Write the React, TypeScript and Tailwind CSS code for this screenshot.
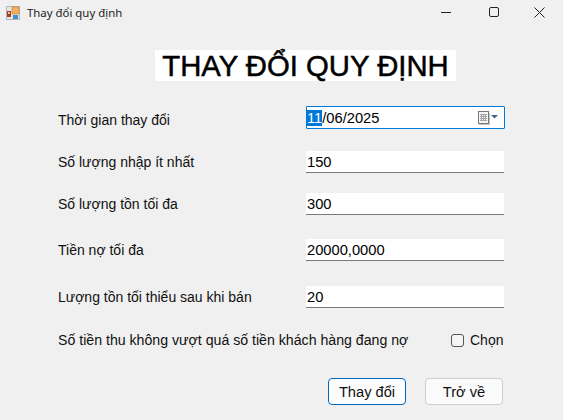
import { FC } from "react";

const sans = "font-['Noto_Sans','Liberation_Sans',sans-serif]";
const arial = "font-['Liberation_Sans',Arial,sans-serif]";

const AppIcon: FC = () => (
  <svg width="14" height="14" viewBox="0 0 14 14">
    <rect x="0.5" y="0.5" width="13" height="13" fill="#e6e6e6" stroke="#b5b5b5" />
    <rect x="6" y="1" width="7" height="7" fill="#f4b060" stroke="#c77f2a" strokeWidth="0.6" />
    <rect x="1" y="5" width="4" height="6" fill="#a83c1e" />
    <rect x="2" y="6" width="2" height="2" fill="#e8c9a0" />
    <rect x="7" y="9" width="5" height="4" fill="#3f8fd8" />
  </svg>
);

const CalendarIcon: FC = () => (
  <svg width="20" height="14" viewBox="0 0 20 14">
    <rect x="0.5" y="0.5" width="10" height="12" fill="#f6f6f6" stroke="#777" />
    <path d="M2 3.500h7M2 5.500h7M2 7.500h7M2 9.500h7M3.500 3v7M5.500 3v7M7.500 3v7" stroke="#a5a5a5" strokeWidth="1" />
    <path d="M1 13.500h10.500V2" fill="none" stroke="#c4c4c4" />
    <path d="M13 4h7l-3.500 3.500z" fill="#4b6288" />
  </svg>
);

const Row: FC<{ label: string; value: string; className: string }> = ({ label, value, className }) => (
  <div className={`flex items-start ${className}`}>
    <div className={`w-[248px] pt-[2px] text-[14px] leading-[18px] text-[#111] ${arial}`}>{label}</div>
    <div
      className={`w-[198px] h-[22px] bg-white border-b border-b-[#7a7a7a] pl-[1px] text-[14.700px] leading-[22px] text-black ${arial}`}
    >
      {value}
    </div>
  </div>
);

const App: FC = () => {
  return (
    <div className="w-[563px] h-[420px] bg-[#f0f0f0] overflow-hidden flex flex-col">
      <div className="h-[30px] flex items-start pl-[6px] shrink-0">
        <div className="h-[25px] flex items-center">
          <AppIcon />
          <span className={`ml-[7px] text-[11.400px] text-[#222] ${sans}`}>Thay đổi quy định</span>
        </div>
        <div className="ml-auto flex items-center">
          <svg width="46" height="30" viewBox="0 0 46 30" className="mr-[1px]">
            <path d="M17 12.500h10" stroke="#222" strokeWidth="1" />
          </svg>
          <svg width="46" height="30" viewBox="0 0 46 30">
            <rect x="18.500" y="7.500" width="9" height="9" rx="1.500" fill="none" stroke="#222" />
          </svg>
          <svg width="46" height="30" viewBox="0 0 46 30">
            <path d="M17.500 7.500l10 10M27.500 7.500l-10 10" stroke="#222" strokeWidth="1" />
          </svg>
        </div>
      </div>

      <div className="flex flex-col pl-[58px] pt-[20px]">
        <h1
          className={`ml-[97px] w-[301px] h-[31px] bg-white text-center text-[29.300px] leading-[31px] font-normal text-black [-webkit-text-stroke:0.5px_#000] ${arial}`}
        >
          THAY ĐỔI QUY ĐỊNH
        </h1>

        <div className="flex items-start mt-[25px] h-[23px]">
          <div className={`w-[248px] pt-[6px] text-[14px] leading-[17px] text-[#111] ${arial}`}>Thời gian thay đổi</div>
          <div className="w-[199px] h-[23px] bg-white border border-[#0078d7] rounded-[1px] flex items-center pr-[6px] pt-[1px]">
            <span className={`text-[14.700px] leading-[17px] text-black ${arial}`}>
              <span className="bg-[#0078d7] text-white">11</span>/06/2025
            </span>
            <span className="ml-auto flex">
              <CalendarIcon />
            </span>
          </div>
        </div>

        <Row label="Số lượng nhập ít nhất" value="150" className="mt-[22px]" />
        <Row label="Số lượng tồn tối đa" value="300" className="mt-[20px]" />
        <Row label="Tiền nợ tối đa" value="20000,0000" className="mt-[24px]" />
        <Row label="Lượng tồn tối thiểu sau khi bán" value="20" className="mt-[25px]" />

        <div className={`flex items-center mt-[22px] h-[21px] text-[14px] text-[#111] ${arial}`}>
          <span className="w-[393px] text-[14.150px]">Số tiền thu không vượt quá số tiền khách hàng đang nợ</span>
          <span className="w-[13px] h-[13px] border border-[#555] rounded-[3px] bg-[#f5f5f5]" />
          <span className="ml-[6px]">Chọn</span>
        </div>

        <div className={`flex mt-[27px] ml-[270px] gap-[19px] text-[14.670px] text-[#111] ${arial}`}>
          <button className="w-[78px] h-[27px] bg-[#fdfdfd] border border-[#0067c0] rounded-[4px]">Thay đổi</button>
          <button className="w-[78px] h-[27px] bg-[#fbfbfb] border border-[#cfcfcf] rounded-[4px]">Trở về</button>
        </div>
      </div>
    </div>
  );
};

export default App;
